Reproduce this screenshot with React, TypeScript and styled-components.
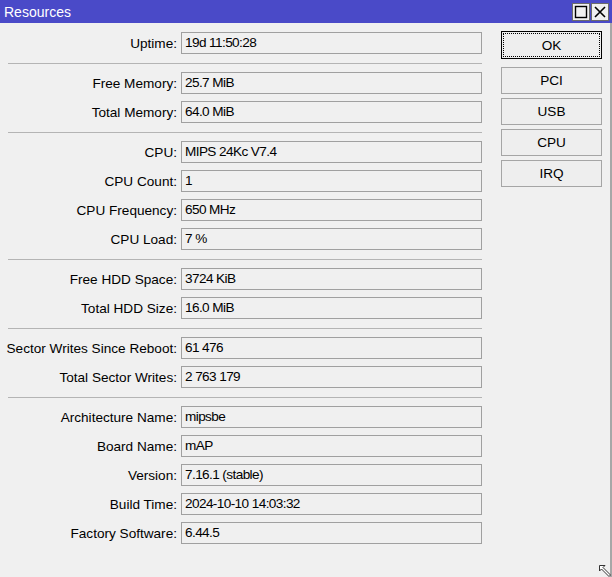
import React from "react";
import styled, { createGlobalStyle } from "styled-components";

const Global = createGlobalStyle`
  html, body { margin: 0; padding: 0; background: #f0f0f0; }
  body { font-family: "Liberation Sans", Arial, sans-serif; }
`;

const Window = styled.div`
  position: relative;
  width: 612px;
  height: 577px;
  background: #f0f0f0;
  display: flex;
  flex-direction: column;
  overflow: hidden;
`;

const TitleBar = styled.div`
  height: 23px;
  background: #4a4ac8;
  display: flex;
  align-items: center;
  justify-content: space-between;
  padding-left: 4px;
  padding-right: 3px;
  box-sizing: border-box;
  flex: none;
`;

const Title = styled.span`
  color: #ffffff;
  font-size: 14px;
  line-height: 23px;
  padding-top: 2px;
`;

const Controls = styled.div`
  display: flex;
  gap: 1px;
  margin-top: 1px;
`;

const CtrlBtn = styled.div`
  width: 18px;
  height: 18px;
  box-sizing: border-box;
  background: #f0f0f0;
  border: 1px solid #6b6b6b;
  display: flex;
  align-items: center;
  justify-content: center;
`;

const Body = styled.div`
  flex: 1;
  display: flex;
  gap: 19px;
  border-right: 2px solid #a7a7a7;
`;

const Form = styled.div`
  display: flex;
  flex-direction: column;
  gap: 7px;
  padding-top: 9px;
`;

const Row = styled.div`
  display: grid;
  grid-template-columns: 177px 301px;
  column-gap: 4px;
  align-items: center;
  height: 22px;
`;

const Label = styled.div`
  text-align: right;
  font-size: 13.6px;
  color: #000;
  white-space: nowrap;
`;

const Field = styled.div`
  height: 22px;
  box-sizing: border-box;
  border: 1px solid #a0a0a0;
  background: #f0f0f0;
  padding-left: 3px;
  font-size: 13.6px;
  letter-spacing: -0.6px;
  line-height: 20px;
  color: #000;
  white-space: nowrap;
`;

const Separator = styled.div`
  height: 1px;
  margin: 2px 0 1px 8px;
  background: #b4b4b4;
`;

const Buttons = styled.div`
  display: flex;
  flex-direction: column;
  gap: 4px;
  padding-top: 8px;
`;

const Button = styled.div<{ $default?: boolean }>`
  width: 101px;
  height: ${(p) => (p.$default ? "28px" : "27px")};
  margin-bottom: ${(p) => (p.$default ? "4px" : "0")};
  box-sizing: border-box;
  border: 1px solid ${(p) => (p.$default ? "#000" : "#a5a5a5")};
  background: #eeeeee;
  display: flex;
  align-items: center;
  justify-content: center;
  font-size: 13.6px;
  color: #000;
  position: relative;
`;

const Focus = styled.span`
  position: absolute;
  inset: 1px;
  border: 1px dotted #000;
`;

const Grip = styled.div`
  position: absolute;
  right: 1px;
  bottom: 2px;
  width: 12px;
  height: 12px;
`;

type Item = { label: string; value: string } | "sep";

const items: Item[] = [
  { label: "Uptime:", value: "19d 11:50:28" },
  "sep",
  { label: "Free Memory:", value: "25.7 MiB" },
  { label: "Total Memory:", value: "64.0 MiB" },
  "sep",
  { label: "CPU:", value: "MIPS 24Kc V7.4" },
  { label: "CPU Count:", value: "1" },
  { label: "CPU Frequency:", value: "650 MHz" },
  { label: "CPU Load:", value: "7 %" },
  "sep",
  { label: "Free HDD Space:", value: "3724 KiB" },
  { label: "Total HDD Size:", value: "16.0 MiB" },
  "sep",
  { label: "Sector Writes Since Reboot:", value: "61 476" },
  { label: "Total Sector Writes:", value: "2 763 179" },
  "sep",
  { label: "Architecture Name:", value: "mipsbe" },
  { label: "Board Name:", value: "mAP" },
  { label: "Version:", value: "7.16.1 (stable)" },
  { label: "Build Time:", value: "2024-10-10 14:03:32" },
  { label: "Factory Software:", value: "6.44.5" },
];

export default function App() {
  return (
    <>
      <Global />
      <Window>
        <TitleBar>
          <Title>Resources</Title>
          <Controls>
            <CtrlBtn>
              <svg width="14" height="14" viewBox="0 0 14 14">
                <rect x="1.5" y="1.5" width="11" height="11" fill="none" stroke="#000" strokeWidth="1.4" />
              </svg>
            </CtrlBtn>
            <CtrlBtn>
              <svg width="14" height="14" viewBox="0 0 14 14">
                <path d="M2 2 L12 12 M12 2 L2 12" stroke="#000" strokeWidth="1.6" />
              </svg>
            </CtrlBtn>
          </Controls>
        </TitleBar>
        <Body>
          <Form>
            {items.map((it, i) =>
              it === "sep" ? (
                <Separator key={i} />
              ) : (
                <Row key={i}>
                  <Label>{it.label}</Label>
                  <Field>{it.value}</Field>
                </Row>
              )
            )}
          </Form>
          <Buttons>
            <Button $default>
              <Focus />
              OK
            </Button>
            <Button>PCI</Button>
            <Button>USB</Button>
            <Button>CPU</Button>
            <Button>IRQ</Button>
          </Buttons>
        </Body>
        <Grip>
          <svg width="12" height="12" viewBox="0 0 12 12">
            <polygon
              points="0.5,0.5 6,0.5 4,2.5 11.5,10 10,11.5 2.5,4 0.5,6"
              fill="#fff"
              stroke="#333"
              strokeWidth="1"
            />
          </svg>
        </Grip>
      </Window>
    </>
  );
}
